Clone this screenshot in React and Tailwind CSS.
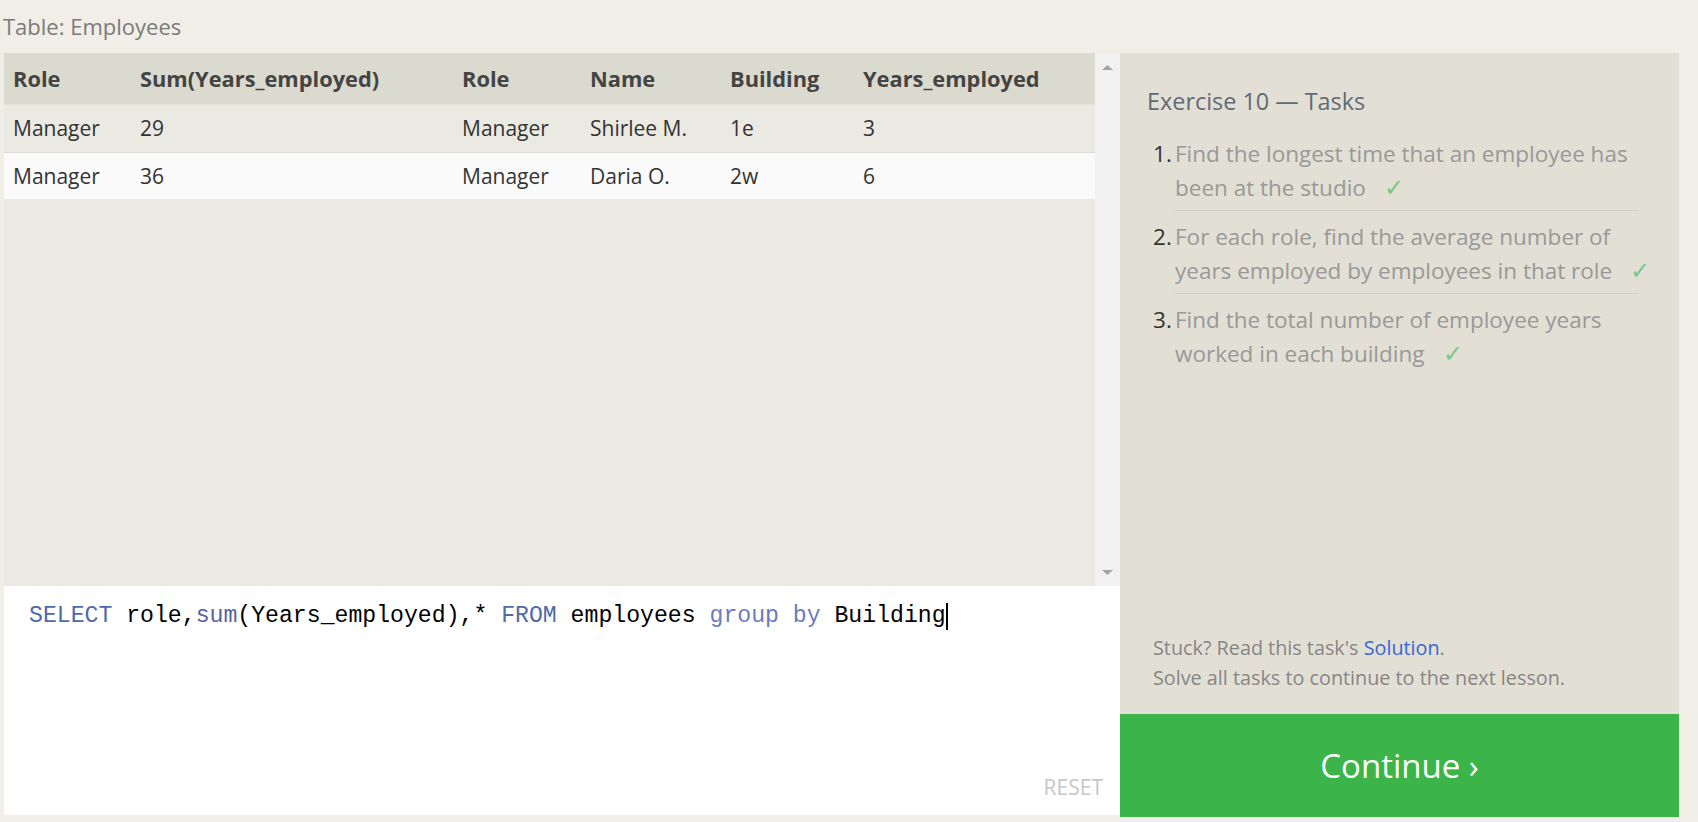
import React from "react";

const cols = [127, 322, 128, 140, 133, 241];
const headers = ["Role", "Sum(Years_employed)", "Role", "Name", "Building", "Years_employed"];
const rows = [
  ["Manager", "29", "Manager", "Shirlee M.", "1e", "3"],
  ["Manager", "36", "Manager", "Daria O.", "2w", "6"],
];

const tasks = [
  ["Find the longest time that an employee has", "been at the studio"],
  ["For each role, find the average number of", "years employed by employees in that role"],
  ["Find the total number of employee years", "worked in each building"],
];

export default function App() {
  return (
    <div className="w-[1698px] h-[822px] bg-[#f0eee7] overflow-hidden font-['Open_Sans',sans-serif]">
      <div className="h-[53px] pl-[3px] flex items-center text-[22px] text-[#7a7a7a]">Table: Employees</div>
      <div className="flex items-start ml-[4px]">
        <div className="w-[1116px] flex flex-col">
          <div className="h-[533px] flex">
            <div className="w-[1091px] bg-[#ebe9e1]">
              <table className="table-fixed border-collapse text-left">
                <colgroup>
                  {cols.map((w, i) => (
                    <col key={i} style={{ width: w }} />
                  ))}
                </colgroup>
                <thead>
                  <tr className="h-[51px] bg-[#dbdacf] border-b border-[#e3e2d8]">
                    {headers.map((h, i) => (
                      <th key={i} className="pl-[9px] pt-[3px] font-bold text-[21.8px] text-[#444] whitespace-nowrap">{h}</th>
                    ))}
                  </tr>
                </thead>
                <tbody>
                  {rows.map((r, ri) => (
                    <tr key={ri} className={ri === 0 ? "h-[48px] bg-[#ebeae2] border-b border-[#dcdcd6]" : "h-[47px] bg-[#fafafa]"}>
                      {r.map((c, ci) => (
                        <td key={ci} className="pl-[9px] pt-[1px] text-[21px] text-[#333]">{c}</td>
                      ))}
                    </tr>
                  ))}
                </tbody>
              </table>
            </div>
            <div className="w-[25px] bg-[#f1f1f1] flex flex-col items-center justify-between pt-[12px] pb-[11px]">
              <svg width="11" height="5" viewBox="0 0 11 5"><path d="M5.5 0 L11 5 L0 5 Z" fill="#a3a3a3" /></svg>
              <svg width="11" height="5" viewBox="0 0 11 5"><path d="M0 0 L11 0 L5.5 5 Z" fill="#a3a3a3" /></svg>
            </div>
          </div>
          <div className="h-[229px] bg-white flex flex-col pl-[25px] pr-[17px] pt-[15px] pb-[15px]">
            <div className="font-['Liberation_Mono',monospace] text-[23.15px] leading-[30px] text-black whitespace-pre flex items-center">
              <span className="text-[#4f6aa8]">SELECT</span>
              <span> role,</span>
              <span className="text-[#5661a6]">sum</span>
              <span>(Years_employed),* </span>
              <span className="text-[#4f6aa8]">FROM</span>
              <span> employees </span>
              <span className="text-[#6a7bbd]">group by</span>
              <span> Building</span>
              <span className="inline-block w-[2px] h-[27px] bg-black"></span>
            </div>
            <div className="mt-auto self-end text-[21px] leading-[26px] text-[#c6c6c6]">RESET</div>
          </div>
        </div>
        <div className="w-[559px] h-[764px] bg-[#e2dfd4] flex flex-col">
          <div className="flex-1 flex flex-col pt-[33px]">
            <div className="pl-[27px] text-[23.4px] leading-[30px] text-[#5f6b78]">Exercise 10 — Tasks</div>
            <div className="mt-[12px] pl-[33px] pr-[42px] flex flex-col">
              {tasks.map((t, i) => (
                <div key={i} className="flex text-[22.5px] leading-[33.5px]">
                  <span className="w-[22px] shrink-0 pt-[9px] text-[#333]">{i + 1}.</span>
                  <div className={i < 2 ? "flex-1 min-w-0 pt-[9px] pb-[5px] border-b border-[#d4d1c5]" : "flex-1 min-w-0 pt-[9px] pb-[5px]"}>
                    <div className="text-[#999] whitespace-nowrap">{t[0]}</div>
                    <div className="text-[#999] whitespace-nowrap">
                      {t[1]}
                      <span className="ml-[18px] text-[24px] font-['DejaVu_Sans',sans-serif] font-light text-[#7cc883]">✓</span>
                    </div>
                  </div>
                </div>
              ))}
            </div>
            <div className="mt-auto pl-[33px] pb-[21px] text-[19.8px] leading-[30px] text-[#868686]">
              <div>
                Stuck? Read this task's <span className="text-[#3a66d6]">Solution</span>.
              </div>
              <div>Solve all tasks to continue to the next lesson.</div>
            </div>
          </div>
          <div className="h-[103px] bg-[#3bb54a] flex items-center justify-center text-white text-[33px]">
            Continue ›
          </div>
        </div>
      </div>
    </div>
  );
}
